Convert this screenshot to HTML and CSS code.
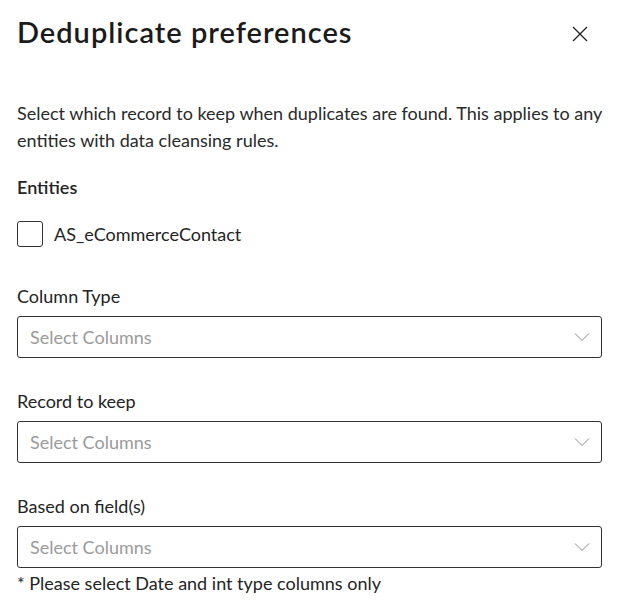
FILE: index.html
```html
<!DOCTYPE html>
<html>
<head>
<meta charset="utf-8">
<link rel="stylesheet" href="styles.css">
</head>
<body>
<div class="panel">
  <div class="header">
    <h1 class="title">Deduplicate preferences</h1>
    <button class="close" aria-label="Close">
      <svg width="16" height="16" viewBox="0 0 16 16"><path d="M1 1 L15 15 M15 1 L1 15" stroke="#222" stroke-width="1.3" fill="none"/></svg>
    </button>
  </div>
  <p class="desc">Select which record to keep when duplicates are found. This applies to any entities with data cleansing rules.</p>
  <div class="section-label">Entities</div>
  <label class="check-row">
    <span class="checkbox"></span>
    <span class="check-text">AS_eCommerceContact</span>
  </label>
  <div class="field">
    <div class="field-label">Column Type</div>
    <div class="select"><span class="placeholder">Select Columns</span><svg class="chev" width="16" height="10" viewBox="0 0 16 10"><path d="M1 1.5 L8 8.5 L15 1.5" stroke="#8a8a8a" stroke-width="1" fill="none"/></svg></div>
  </div>
  <div class="field">
    <div class="field-label">Record to keep</div>
    <div class="select"><span class="placeholder">Select Columns</span><svg class="chev" width="16" height="10" viewBox="0 0 16 10"><path d="M1 1.5 L8 8.5 L15 1.5" stroke="#8a8a8a" stroke-width="1" fill="none"/></svg></div>
  </div>
  <div class="field">
    <div class="field-label">Based on field(s)</div>
    <div class="select"><span class="placeholder">Select Columns</span><svg class="chev" width="16" height="10" viewBox="0 0 16 10"><path d="M1 1.5 L8 8.5 L15 1.5" stroke="#8a8a8a" stroke-width="1" fill="none"/></svg></div>
    <div class="note">* Please select Date and int type columns only</div>
  </div>
</div>
</body>
</html>
```
FILE: styles.css
```css
html, body { margin: 0; padding: 0; background: #fff; }
body { font-family: "Lato", "Noto Sans", sans-serif; color: #242424; }
.panel { padding: 13px 21px 0 17px; }
.header { display: flex; justify-content: space-between; align-items: center; height: 38px; }
.title { margin: 0; font-size: 29px; font-weight: 600; color: #1b1b1b; letter-spacing: 1px; line-height: 38px; }
.close { background: none; border: 0; padding: 0; width: 16px; height: 16px; margin-right: 14px; margin-top: 4px; display: flex; }
.desc { margin: 49px 0 0; font-size: 18px; line-height: 27px; color: #2a2a2a; }
.section-label { margin-top: 23px; font-size: 18px; font-weight: 600; line-height: 20px; }
.check-row { display: flex; align-items: center; gap: 11px; margin-top: 24px; height: 26px; }
.checkbox { width: 24px; height: 24px; border: 1px solid #333; border-radius: 3px; }
.check-text { font-size: 18px; }
.field { margin-top: 38px; }
.field + .field { margin-top: 32px; }
.field-label { font-size: 18px; line-height: 22px; margin-bottom: 9px; }
.select { box-sizing: border-box; display: flex; align-items: center; justify-content: space-between; height: 42px; border: 1px solid #333; border-radius: 3px; padding: 0 11px 0 12px; }
.placeholder { font-size: 18px; color: #9a9a9a; }
.note { font-size: 18px; line-height: 22px; margin-top: 4px; }
```
